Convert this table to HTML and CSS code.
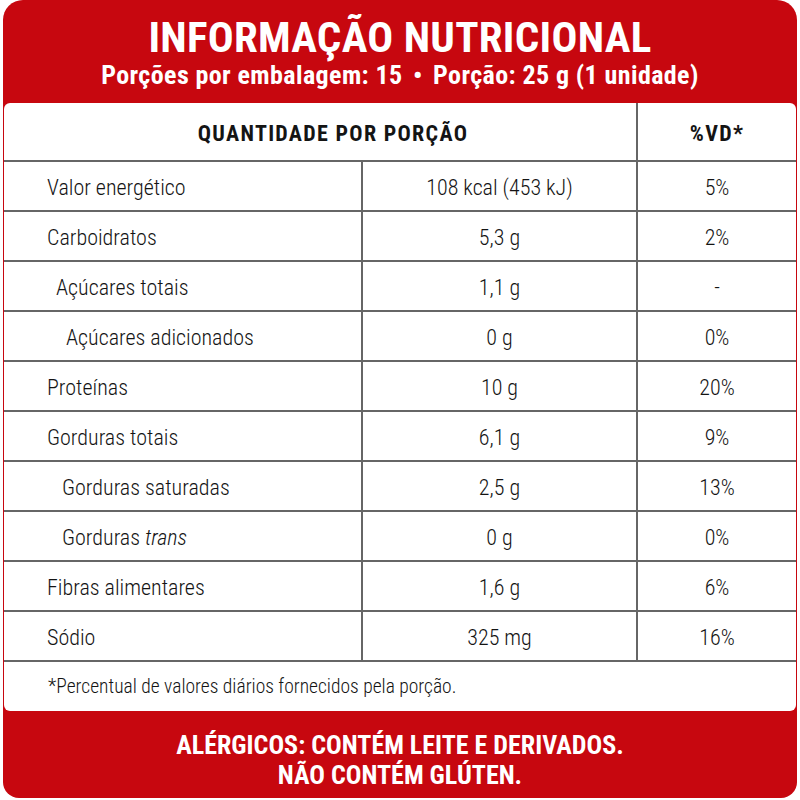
FILE: index.html
```html
<!DOCTYPE html>
<html lang="pt-BR">
<head>
<meta charset="utf-8">
<title>Informação Nutricional</title>
<link rel="stylesheet" href="styles.css">
</head>
<body>
<div class="label">
  <header class="head">
    <h1 class="title">INFORMAÇÃO NUTRICIONAL</h1>
    <p class="subtitle">Porções por embalagem: 15 <span class="dot">•</span> Porção: 25 g (1 unidade)</p>
  </header>
  <div class="panel">
    <table class="facts">
      <colgroup>
        <col class="c1"><col class="c2"><col class="c3">
      </colgroup>
      <thead>
        <tr class="hrow">
          <th colspan="2" class="hq">QUANTIDADE POR PORÇÃO</th>
          <th class="hv">%VD*</th>
        </tr>
      </thead>
      <tbody>
        <tr><td class="name">Valor energético</td><td class="qty">108 kcal (453 kJ)</td><td class="vd">5%</td></tr>
        <tr><td class="name">Carboidratos</td><td class="qty">5,3 g</td><td class="vd">2%</td></tr>
        <tr><td class="name sub1">Açúcares totais</td><td class="qty">1,1 g</td><td class="vd">-</td></tr>
        <tr><td class="name sub2">Açúcares adicionados</td><td class="qty">0 g</td><td class="vd">0%</td></tr>
        <tr><td class="name">Proteínas</td><td class="qty">10 g</td><td class="vd">20%</td></tr>
        <tr><td class="name">Gorduras totais</td><td class="qty">6,1 g</td><td class="vd">9%</td></tr>
        <tr><td class="name sub3">Gorduras saturadas</td><td class="qty">2,5 g</td><td class="vd">13%</td></tr>
        <tr><td class="name sub3">Gorduras <em>trans</em></td><td class="qty">0 g</td><td class="vd">0%</td></tr>
        <tr><td class="name">Fibras alimentares</td><td class="qty">1,6 g</td><td class="vd">6%</td></tr>
        <tr><td class="name">Sódio</td><td class="qty">325 mg</td><td class="vd">16%</td></tr>
      </tbody>
    </table>
    <p class="note">*Percentual de valores diários fornecidos pela porção.</p>
  </div>
  <footer class="allergy">
    <p class="aline">ALÉRGICOS: CONTÉM LEITE E DERIVADOS.</p>
    <p class="aline">NÃO CONTÉM GLÚTEN.</p>
  </footer>
</div>
</body>
</html>
```
FILE: styles.css
```css
html, body {
  margin: 0;
  padding: 0;
  background: #ffffff;
}
body {
  font-family: "Roboto Condensed", "Liberation Sans Narrow", "DejaVu Sans Condensed", "Liberation Sans", sans-serif;
  color: #1e1e1e;
}
.label {
  width: 794px;
  height: 798px;
  margin: 0 3px;
  background: #c7070f;
  border-radius: 20px 20px 16px 16px;
  display: flex;
  flex-direction: column;
  overflow: hidden;
}
.head {
  height: 103px;
  box-sizing: border-box;
  padding-top: 15px;
  text-align: center;
  color: #ffffff;
}
.title {
  margin: 0;
  font-size: 43px;
  line-height: 44px;
  font-weight: 700;
  letter-spacing: 0.3px;
}
.subtitle {
  margin: 0;
  font-size: 26px;
  line-height: 32px;
  font-weight: 700;
  letter-spacing: 0.4px;
}
.dot {
  margin: 0 4px;
}
.panel {
  height: 608px;
  margin: 0 1px;
  background: #ffffff;
  border-radius: 6px;
  box-sizing: border-box;
}
.facts {
  width: 100%;
  border-collapse: collapse;
  table-layout: fixed;
}
.c1 { width: 358px; }
.c2 { width: 275px; }
.c3 { width: 159px; }
.hrow th {
  height: 53px;
  padding: 0;
  padding-top: 4px;
  font-size: 22px;
  font-weight: 700;
  letter-spacing: 1.3px;
  color: #141414;
  border-bottom: 2px solid #666666;
}
.hq {
  text-align: center;
  padding-left: 26px !important;
}
.hv {
  text-align: center;
  border-left: 2px solid #666666;
}
.facts td {
  height: 45px;
  padding: 0;
  padding-top: 3px;
  font-size: 22px;
  font-weight: 300;
  color: #141414;
  border-bottom: 2px solid #666666;
}
.name {
  padding-left: 43px !important;
  text-align: left;
}
.sub1 { padding-left: 52px !important; }
.sub2 { padding-left: 62px !important; }
.sub3 { padding-left: 58px !important; }
.qty {
  text-align: center;
  border-left: 2px solid #666666;
}
.vd {
  text-align: center;
  border-left: 2px solid #666666;
}
.note {
  margin: 0;
  height: 48px;
  line-height: 50px;
  padding-left: 44px;
  font-size: 19.5px;
  font-weight: 300;
  color: #141414;
}
.allergy {
  flex: 1;
  padding-top: 19px;
  text-align: center;
  color: #ffffff;
}
.aline {
  margin: 0;
  font-size: 26px;
  line-height: 30px;
  font-weight: 700;
}
```
